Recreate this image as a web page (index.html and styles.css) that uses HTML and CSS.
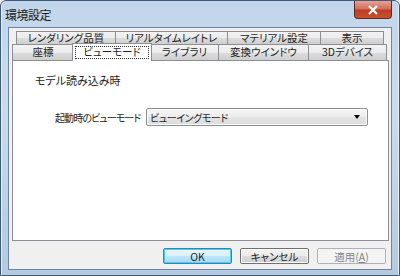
FILE: index.html
```html
<!DOCTYPE html>
<html>
	<head>
		<meta charset="UTF-8">
		<title>環境設定</title>
		<link rel="stylesheet" href="styles.css">
	</head>
	<body>
		<div class="win">
			<div class="titlebar">
				<span class="title">環境設定</span>
				<a href="javascript:;" class="close">
					<svg width="12" height="10" viewBox="0 0 12 10">
						<path d="M2 1 L10 9 M10 1 L2 9" stroke="#fff" stroke-width="2.2" />
					</svg>
				</a>
			</div>
			<div class="client">
				<div class="tabs">
					<div class="row back">
						<span class="tab w99">レンダリング品質</span>
						<span class="tab w112">リアルタイムレイトレ</span>
						<span class="tab w93">マテリアル設定</span>
						<span class="tab w63">表示</span>
					</div>
					<div class="row front">
						<span class="tab w61">座標</span>
						<span class="tab sel"><em>ビューモード</em></span>
						<span class="tab w68">ライブラリ</span>
						<span class="tab w90">変換ウインドウ</span>
						<span class="tab w78">3Dデバイス</span>
					</div>
				</div>
				<div class="page">
					<p class="group">モデル読み込み時</p>
					<div class="field">
						<label>起動時のビューモード</label>
						<div class="combo">
							<span>ビューイングモード</span>
							<i class="arrow"></i>
						</div>
					</div>
				</div>
				<div class="buttons">
					<a href="javascript:;" class="btn def">OK</a>
					<a href="javascript:;" class="btn">キャンセル</a>
					<a href="javascript:;" class="btn off">適用(<u>A</u>)</a>
				</div>
			</div>
		</div>
	</body>
</html>
```

FILE: styles.css
```css
*{
	margin: 0;
	padding: 0;
	box-sizing: border-box;
}
body{
	width: 400px;
	height: 276px;
	overflow: hidden;
	font-family: "Noto Sans CJK JP", "Noto Sans", sans-serif;
	font-feature-settings: "palt";
	font-size: 11px;
	color: #1e1e1e;
	background: #fff;
}
.win{
	width: 400px;
	height: 276px;
	border: 1px solid #3f5a78;
	border-radius: 6px 6px 0 0;
	background: linear-gradient(to bottom, #c2d5ea 0%, #cbdbec 40%, #b4c9e0 100%);
	display: flex;
	flex-direction: column;
	padding: 0 7px 5px 7px;
	box-shadow: inset 1px 0 0 #e6eef7, inset -1px 0 0 #e6eef7;
}
.titlebar{
	height: 26px;
	display: flex;
	align-items: flex-start;
	justify-content: space-between;
}
.title{
	font-size: 12px;
	color: #1a1a1a;
	margin: 5px 0 0 -3px;
	letter-spacing: -0.5px;
}
.close{
	width: 38px;
	height: 18px;
	margin-right: 0;
	border: 1px solid #5a2a24;
	border-top: none;
	border-radius: 0 0 4px 4px;
	background: linear-gradient(to bottom, #e6a394 0%, #d0705e 45%, #bf3a25 55%, #c9532f 100%);
	display: flex;
	align-items: center;
	justify-content: center;
}
.client{
	flex: 1;
	background: #f0f0f0;
	border: 1px solid #6d86a3;
	display: flex;
	flex-direction: column;
	padding: 3px 2px 0 3px;
}
.tabs{
	height: 29px;
	position: relative;
	z-index: 1;
}
.row{
	display: flex;
	height: 13px;
}
.back{
	padding-left: 4px;
	height: 13px;
}
.front{
	height: 16px;
}
.tab{
	height: 100%;
	border: 1px solid #8c8e94;
	border-bottom: none;
	margin-right: -1px;
	background: linear-gradient(to bottom, #f3f3f3 0%, #ebebeb 50%, #dddddd 51%, #cfcfcf 100%);
	display: flex;
	align-items: center;
	justify-content: center;
	font-size: 10.5px;
	line-height: 1;
	white-space: nowrap;
	color: #1e1e1e;
}
.w99{ width: 100px; }
.w112{ width: 113px; }
.w93{ width: 94px; }
.w63{ width: 64px; }
.w61{ width: 62px; }
.w68{ width: 69px; }
.w90{ width: 91px; }
.w78{ width: 79px; }
.front .tab{
	height: 16px;
}
.tab.sel{
	width: 80px;
	height: 18px;
	margin-top: -1px;
	margin-left: -1px;
	margin-right: -2px;
	background: #fff;
	border-color: #8c8e94;
	position: relative;
	z-index: 2;
}
.tab.sel em{
	font-style: normal;
	display: flex;
	align-items: center;
	justify-content: center;
	width: 74px;
	height: 13px;
	border: 1px dotted #333;
}
.page{
	width: 377px;
	height: 181px;
	background: #fff;
	border: 1px solid #8c8e94;
	padding: 12px 0 0 22px;
}
.group{
	font-size: 11px;
	line-height: 14px;
}
.field{
	display: flex;
	align-items: center;
	margin-top: 21px;
	padding-left: 20px;
}
.field label{
	flex: 0 0 91px;
	white-space: nowrap;
	font-size: 10px;
	letter-spacing: -0.9px;
}
.combo{
	width: 222px;
	height: 18px;
	border: 1px solid #8e8f8f;
	border-radius: 2px;
	background: linear-gradient(to bottom, #f6f6f6 0%, #ededed 50%, #e3e3e3 51%, #dcdcdc 100%);
	display: flex;
	align-items: center;
	justify-content: space-between;
	padding: 0 7px 0 3px;
	font-size: 10px;
	letter-spacing: -0.4px;
	box-shadow: inset 0 0 0 1px #fbfbfb;
}
.arrow{
	width: 0;
	height: 0;
	border-left: 3px solid transparent;
	border-right: 3px solid transparent;
	border-top: 4px solid #000;
}
.buttons{
	display: flex;
	justify-content: flex-end;
	gap: 8px;
	padding: 7px 3px 0 0;
}
.btn{
	width: 69px;
	height: 16px;
	border: 1px solid #707070;
	border-radius: 2px;
	background: linear-gradient(to bottom, #f2f2f2 0%, #ebebeb 50%, #dddddd 51%, #cfcfcf 100%);
	display: flex;
	align-items: center;
	justify-content: center;
	font-size: 10.5px;
	color: #1e1e1e;
	text-decoration: none;
	box-shadow: inset 0 0 0 1px #fcfcfc;
}
.btn.def{
	border-color: #3c7fb1;
	background: linear-gradient(to bottom, #eaf6fd 0%, #d9f0fc 50%, #bee6fd 51%, #a7d9f5 100%);
	box-shadow: inset 0 0 0 1px #48d0f4;
}
.btn.off{
	border-color: #adb2b5;
	background: #f4f4f4;
	color: #838383;
	box-shadow: none;
}
```
